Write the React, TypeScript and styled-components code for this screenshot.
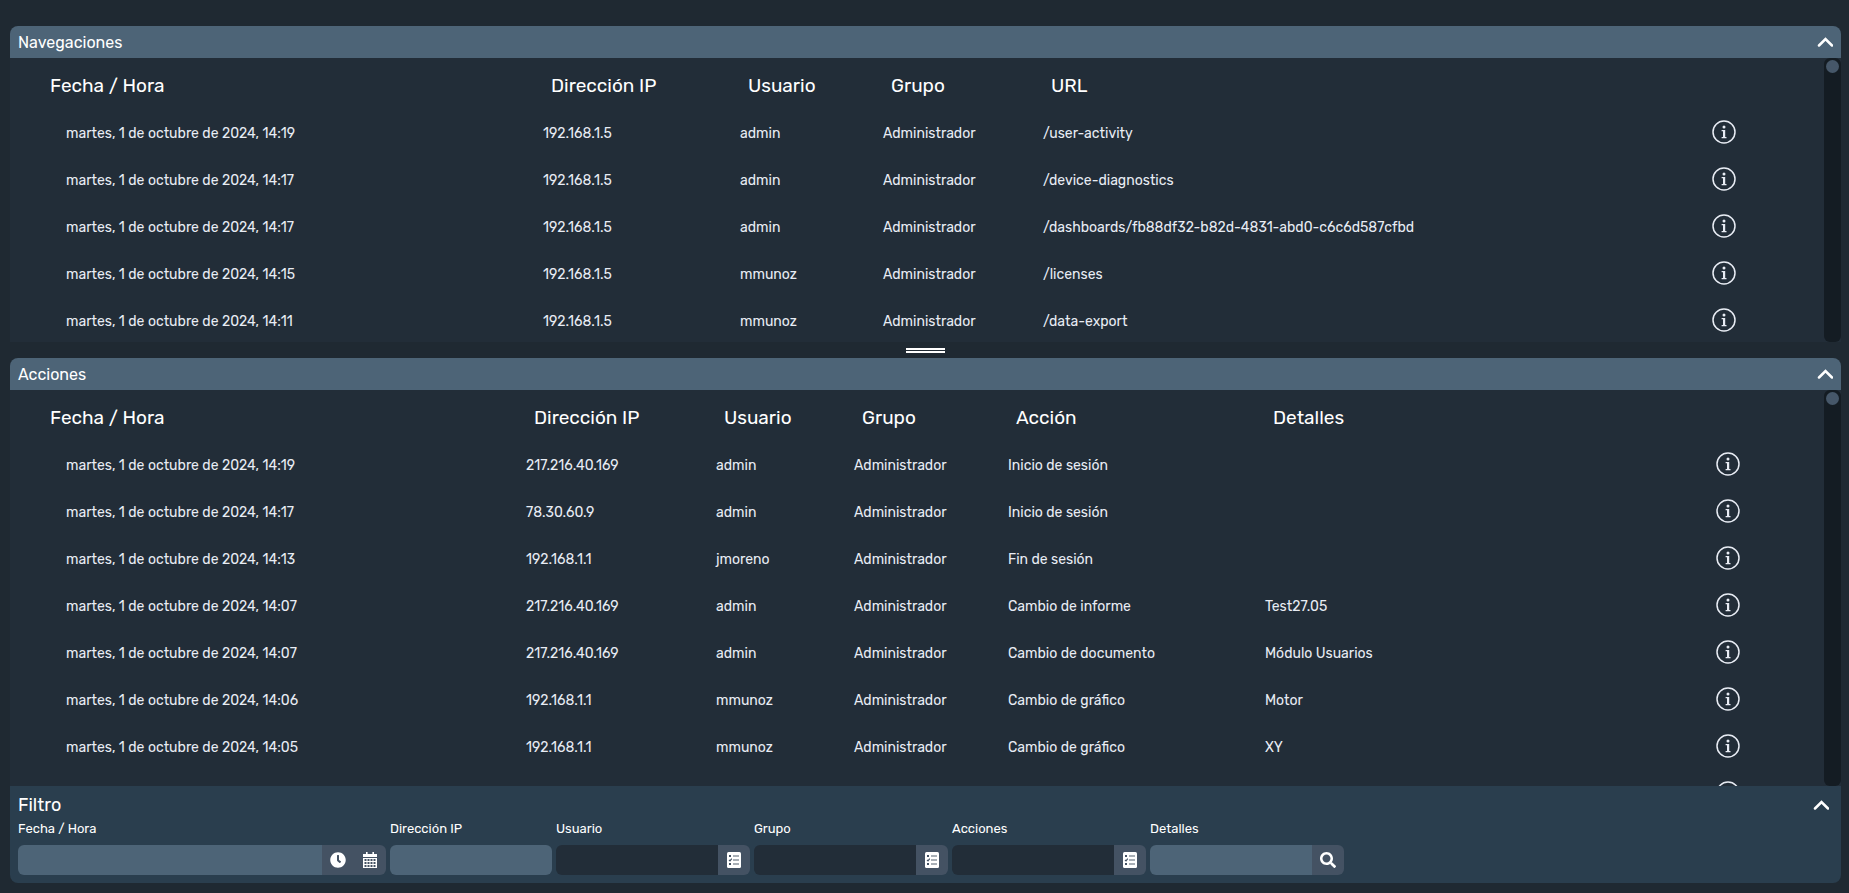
import React from 'react';
import styled, { createGlobalStyle } from 'styled-components';
import { FaClock, FaSearch } from 'react-icons/fa';

const colors = {
  page: '#1f2932',
  panel: '#222d38',
  bar: '#4d6477',
  filter: '#2a3e4e',
  field: '#4d6477',
  addon: '#445263',
  track: '#141c23',
  thumb: '#465769',
  text: '#ffffff',
  cell: '#e8ecf4',
};

const GlobalStyle = createGlobalStyle`
  *, *::before, *::after { box-sizing: border-box; }
  body {
    margin: 0;
    background: ${colors.page};
    color: ${colors.text};
    font-family: Rubik, Roboto, "Liberation Sans", sans-serif;
    font-size: 14px;
  }
`;

const Page = styled.main`
  display: flex;
  flex-direction: column;
  height: 100vh;
  min-height: 640px;
  padding: 26px 8px 10px 10px;
`;

const Panel = styled.section<{ $grow: number }>`
  display: flex;
  flex-direction: column;
  flex: ${(p) => p.$grow} 1 0;
  min-height: 0;
`;

const PanelBar = styled.header`
  display: flex;
  flex: none;
  align-items: center;
  justify-content: space-between;
  height: 32px;
  padding: 0 8px;
  border-radius: 8px 8px 0 0;
  background: ${colors.bar};
`;

const PanelTitle = styled.h2`
  margin: 0;
  padding-top: 2px;
  font-size: 16px;
  line-height: 24px;
  font-weight: 400;
`;

const IconButton = styled.button`
  display: flex;
  align-items: center;
  justify-content: center;
  padding: 0;
  border: 0;
  background: none;
  color: inherit;
  cursor: pointer;
`;

const PanelBody = styled.div`
  display: flex;
  flex: 1;
  min-height: 0;
  background: ${colors.panel};
`;

const Viewport = styled.div`
  flex: 1;
  min-width: 0;
  padding: 0 24px;
  overflow-y: auto;
  scrollbar-width: none;
`;

const Track = styled.div`
  flex: none;
  width: 17px;
  padding: 2px;
  border-radius: 6px;
  background: ${colors.track};
`;

const Thumb = styled.div`
  width: 13px;
  height: 13px;
  border-radius: 50%;
  background: ${colors.thumb};
`;

const Table = styled.table`
  width: 100%;
  table-layout: fixed;
  border-collapse: collapse;
  text-align: left;
`;

const Col = styled.col<{ $share: number }>`
  width: ${(p) => p.$share}%;
`;

const HeadCell = styled.th`
  height: 51px;
  padding: 4px 0 0 16px;
  font-size: 19px;
  line-height: 24px;
  font-weight: 400;
  white-space: nowrap;
`;

const Cell = styled.td`
  height: 47px;
  padding: 2px 0 0 8px;
  color: ${colors.cell};
  line-height: 20px;
  white-space: nowrap;

  &:first-child { padding-left: 32px; }
`;

const ActionCell = styled(Cell)`
  padding: 0 0 2px;

  ${IconButton} { margin: 0 auto; }
`;

const Splitter = styled.div`
  display: flex;
  flex: none;
  flex-direction: column;
  align-items: center;
  justify-content: center;
  gap: 1px;
  height: 16px;
  cursor: row-resize;
`;

const Grip = styled.span`
  width: 39px;
  height: 2px;
  background: ${colors.text};
`;

const Filter = styled.form`
  flex: none;
  padding: 5px 8px 8px;
  border-radius: 0 0 8px 8px;
  background: ${colors.filter};
`;

const FilterHead = styled.div`
  display: flex;
  align-items: center;
  justify-content: space-between;
  padding-right: 4px;
`;

const FilterTitle = styled.h2`
  margin: 0;
  font-size: 18px;
  line-height: 28px;
  font-weight: 400;
`;

const Fields = styled.div`
  display: flex;
  flex-wrap: wrap;
  gap: 4px;
`;

const Field = styled.div`
  display: flex;
  flex-direction: column;
`;

const Label = styled.label`
  height: 26px;
  font-size: 13px;
  line-height: 20px;
`;

const Group = styled.div`
  display: flex;
  height: 30px;
  overflow: hidden;
  border-radius: 6px;
`;

const Input = styled.input<{ $wide?: boolean; $dark?: boolean }>`
  width: ${(p) => (p.$wide ? 304 : 162)}px;
  height: 30px;
  padding: 0 8px;
  border: 0;
  background: ${(p) => (p.$dark ? colors.panel : colors.field)};
  color: inherit;
  font: inherit;
`;

const Addon = styled(IconButton)`
  width: 32px;
  height: 30px;
  background: ${colors.addon};
`;

const Chevron = () => (
  <svg width="16" height="16" viewBox="0 0 16 16" fill="none" stroke="currentColor" strokeWidth="2.5" aria-hidden="true">
    <path d="M2 11.5 8.500 5l6.500 6.500" strokeLinecap="round" />
  </svg>
);

const InfoIcon = () => (
  <svg width="24" height="24" viewBox="0 0 24 24" aria-hidden="true">
    <circle cx="12" cy="12" r="11" fill="none" stroke="currentColor" strokeWidth="1.5" />
    <circle cx="12" cy="6.9" r="1.5" fill="currentColor" />
    <path d="M9.600 10h3.600v7h1.300v1.300H9.600V17h1.400v-5.700H9.600z" fill="currentColor" />
  </svg>
);

const CalendarIcon = () => (
  <svg width="14" height="16" viewBox="0 0 14 16" aria-hidden="true">
    <path d="M3 0h1.600v2h4.800V0H11v2h3v3H0V2h3z" fill="#fff" />
    <path d="M0 6h14v10H0z" fill="#fff" />
    <path d="M1.500 8h11M1.500 11h11M1.500 14h11" stroke="#445263" strokeWidth="1.8" strokeDasharray="2 1" />
  </svg>
);

const ChecklistIcon = () => (
  <svg width="14" height="16" viewBox="0 0 14 16" aria-hidden="true">
    <rect width="14" height="16" rx="1.5" fill="#fff" />
    <path d="M6 4h6M6 8h6M6 12h6" stroke="#8c959f" strokeWidth="1.6" />
    <path d="M2 4h2M2 12h2" stroke="#445263" strokeWidth="2" />
    <path d="m2 7.8 1 1L4.800 6.600" fill="none" stroke="#445263" strokeWidth="1.2" />
  </svg>
);

interface LogTableProps {
  shares: number[];
  heads: string[];
  rows: string[][];
}

const LogTable = ({ shares, heads, rows }: LogTableProps) => {
  const total = shares.reduce((sum, n) => sum + n, 0);
  return (
    <PanelBody>
      <Viewport>
        <Table>
          <colgroup>
            {shares.map((n, i) => (
              <Col key={i} $share={(n / total) * 100} />
            ))}
          </colgroup>
          <thead>
            <tr>
              {heads.map((h) => (
                <HeadCell key={h} scope="col">{h}</HeadCell>
              ))}
              <HeadCell as="td" />
            </tr>
          </thead>
          <tbody>
            {rows.map((row, r) => (
              <tr key={r}>
                {row.map((value, c) => (
                  <Cell key={c}>{value}</Cell>
                ))}
                <ActionCell>
                  <IconButton type="button" aria-label="Información">
                    <InfoIcon />
                  </IconButton>
                </ActionCell>
              </tr>
            ))}
          </tbody>
        </Table>
      </Viewport>
      <Track>
        <Thumb />
      </Track>
    </PanelBody>
  );
};

const day = 'martes, 1 de octubre de 2024, ';

const navigations = [
  [day + '14:19', '192.168.1.5', 'admin', 'Administrador', '/user-activity'],
  [day + '14:17', '192.168.1.5', 'admin', 'Administrador', '/device-diagnostics'],
  [day + '14:17', '192.168.1.5', 'admin', 'Administrador', '/dashboards/fb88df32-b82d-4831-abd0-c6c6d587cfbd'],
  [day + '14:15', '192.168.1.5', 'mmunoz', 'Administrador', '/licenses'],
  [day + '14:11', '192.168.1.5', 'mmunoz', 'Administrador', '/data-export'],
];

const actions = [
  [day + '14:19', '217.216.40.169', 'admin', 'Administrador', 'Inicio de sesión', ''],
  [day + '14:17', '78.30.60.9', 'admin', 'Administrador', 'Inicio de sesión', ''],
  [day + '14:13', '192.168.1.1', 'jmoreno', 'Administrador', 'Fin de sesión', ''],
  [day + '14:07', '217.216.40.169', 'admin', 'Administrador', 'Cambio de informe', 'Test27.05'],
  [day + '14:07', '217.216.40.169', 'admin', 'Administrador', 'Cambio de documento', 'Módulo Usuarios'],
  [day + '14:06', '192.168.1.1', 'mmunoz', 'Administrador', 'Cambio de gráfico', 'Motor'],
  [day + '14:05', '192.168.1.1', 'mmunoz', 'Administrador', 'Cambio de gráfico', 'XY'],
  ['', '', '', '', '', ''],
];

const pickers = [
  { id: 'user', label: 'Usuario' },
  { id: 'group', label: 'Grupo' },
  { id: 'actions', label: 'Acciones' },
];

export default function App() {
  return (
    <>
      <GlobalStyle />
      <Page>
        <Panel $grow={316}>
          <PanelBar>
            <PanelTitle>Navegaciones</PanelTitle>
            <IconButton type="button" aria-label="Contraer navegaciones">
              <Chevron />
            </IconButton>
          </PanelBar>
          <LogTable
            shares={[501, 197, 143, 160, 613, 152]}
            heads={['Fecha / Hora', 'Dirección IP', 'Usuario', 'Grupo', 'URL']}
            rows={navigations}
          />
        </Panel>
        <Splitter role="separator" aria-orientation="horizontal">
          <Grip />
          <Grip />
        </Splitter>
        <Panel $grow={428}>
          <PanelBar>
            <PanelTitle>Acciones</PanelTitle>
            <IconButton type="button" aria-label="Contraer acciones">
              <Chevron />
            </IconButton>
          </PanelBar>
          <LogTable
            shares={[484, 190, 138, 154, 257, 399, 144]}
            heads={['Fecha / Hora', 'Dirección IP', 'Usuario', 'Grupo', 'Acción', 'Detalles']}
            rows={actions}
          />
        </Panel>
        <Filter>
          <FilterHead>
            <FilterTitle>Filtro</FilterTitle>
            <IconButton type="button" aria-label="Contraer filtro">
              <Chevron />
            </IconButton>
          </FilterHead>
          <Fields>
            <Field>
              <Label htmlFor="date">Fecha / Hora</Label>
              <Group>
                <Input id="date" type="text" $wide />
                <Addon type="button" aria-label="Elegir hora">
                  <FaClock size={16} />
                </Addon>
                <Addon type="button" aria-label="Elegir fecha">
                  <CalendarIcon />
                </Addon>
              </Group>
            </Field>
            <Field>
              <Label htmlFor="ip">Dirección IP</Label>
              <Group>
                <Input id="ip" type="text" />
              </Group>
            </Field>
            {pickers.map(({ id, label }) => (
              <Field key={id}>
                <Label htmlFor={id}>{label}</Label>
                <Group>
                  <Input id={id} type="text" readOnly $dark />
                  <Addon type="button" aria-label={'Elegir ' + label.toLowerCase()}>
                    <ChecklistIcon />
                  </Addon>
                </Group>
              </Field>
            ))}
            <Field>
              <Label htmlFor="details">Detalles</Label>
              <Group>
                <Input id="details" type="text" />
                <Addon type="button" aria-label="Buscar">
                  <FaSearch size={16} />
                </Addon>
              </Group>
            </Field>
          </Fields>
        </Filter>
      </Page>
    </>
  );
}
